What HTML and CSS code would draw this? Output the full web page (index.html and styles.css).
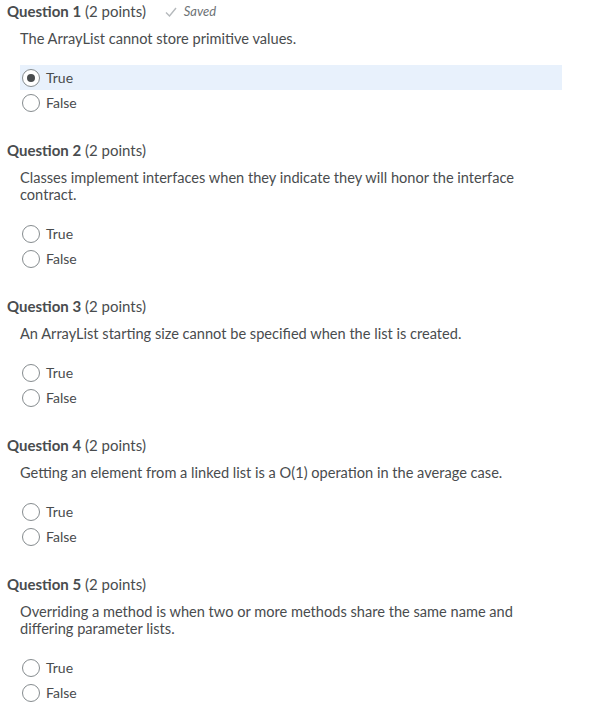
FILE: index.html
```html
<!DOCTYPE html>
<html>
<head>
<meta charset="utf-8">
<link rel="stylesheet" href="styles.css">
</head>
<body>
<div class="quiz">
  <section class="q">
    <h2 class="q-title"><b>Question 1</b> (2 points) <span class="saved"><svg class="check" viewBox="0 0 12 10" width="12" height="10"><path d="M1 5.5 L4.5 9 L11 1" fill="none" stroke="#b5b9bc" stroke-width="1.4"/></svg>Saved</span></h2>
    <p class="q-text">The ArrayList cannot store primitive values.</p>
    <div class="opts">
      <div class="opt selected"><span class="radio on"></span>True</div>
      <div class="opt"><span class="radio"></span>False</div>
    </div>
  </section>
  <section class="q">
    <h2 class="q-title"><b>Question 2</b> (2 points)</h2>
    <p class="q-text">Classes implement interfaces when they indicate they will honor the interface contract.</p>
    <div class="opts">
      <div class="opt"><span class="radio"></span>True</div>
      <div class="opt"><span class="radio"></span>False</div>
    </div>
  </section>
  <section class="q">
    <h2 class="q-title"><b>Question 3</b> (2 points)</h2>
    <p class="q-text">An ArrayList starting size cannot be specified when the list is created.</p>
    <div class="opts">
      <div class="opt"><span class="radio"></span>True</div>
      <div class="opt"><span class="radio"></span>False</div>
    </div>
  </section>
  <section class="q">
    <h2 class="q-title"><b>Question 4</b> (2 points)</h2>
    <p class="q-text">Getting an element from a linked list is a O(1) operation in the average case.</p>
    <div class="opts">
      <div class="opt"><span class="radio"></span>True</div>
      <div class="opt"><span class="radio"></span>False</div>
    </div>
  </section>
  <section class="q">
    <h2 class="q-title"><b>Question 5</b> (2 points)</h2>
    <p class="q-text">Overriding a method is when two or more methods share the same name and differing parameter lists.</p>
    <div class="opts">
      <div class="opt"><span class="radio"></span>True</div>
      <div class="opt"><span class="radio"></span>False</div>
    </div>
  </section>
</div>
</body>
</html>
```
FILE: styles.css
```css
html, body {
  margin: 0;
  padding: 0;
  background: #fff;
}
body {
  font-family: Lato, "Open Sans", sans-serif;
  color: #494c4e;
}
.quiz {
  padding: 2px 32px 0 7px;
  display: flex;
  flex-direction: column;
  gap: 26px;
}
.q-title {
  margin: 0;
  height: 18px;
  font-size: 15px;
  font-weight: 400;
  line-height: 18px;
  color: #494c4e;
  white-space: nowrap;
}
.q-title b {
  font-weight: 700;
}
.saved {
  margin-left: 15px;
  font-style: italic;
  font-size: 13px;
  line-height: 18px;
  color: #6e7376;
  vertical-align: top;
}
.check {
  margin-right: 7px;
  vertical-align: -1px;
}
.q-text {
  margin: 10px 0 0 13px;
  font-size: 14.6px;
  line-height: 17px;
  max-width: 505px;
}
.opts {
  margin: 18px 0 0 13px;
  display: flex;
  flex-direction: column;
}
.opt {
  height: 25px;
  display: flex;
  align-items: center;
  font-size: 14px;
  padding-left: 2px;
  gap: 6px;
}
.opt.selected {
  background: #e8f1fc;
}
.radio {
  width: 18px;
  height: 18px;
  border: 1px solid #868c8f;
  border-radius: 50%;
  box-sizing: border-box;
  display: inline-flex;
  align-items: center;
  justify-content: center;
  background: #fff;
}
.radio.on::after {
  content: "";
  width: 8px;
  height: 8px;
  border-radius: 50%;
  background: #494c4e;
}
```
